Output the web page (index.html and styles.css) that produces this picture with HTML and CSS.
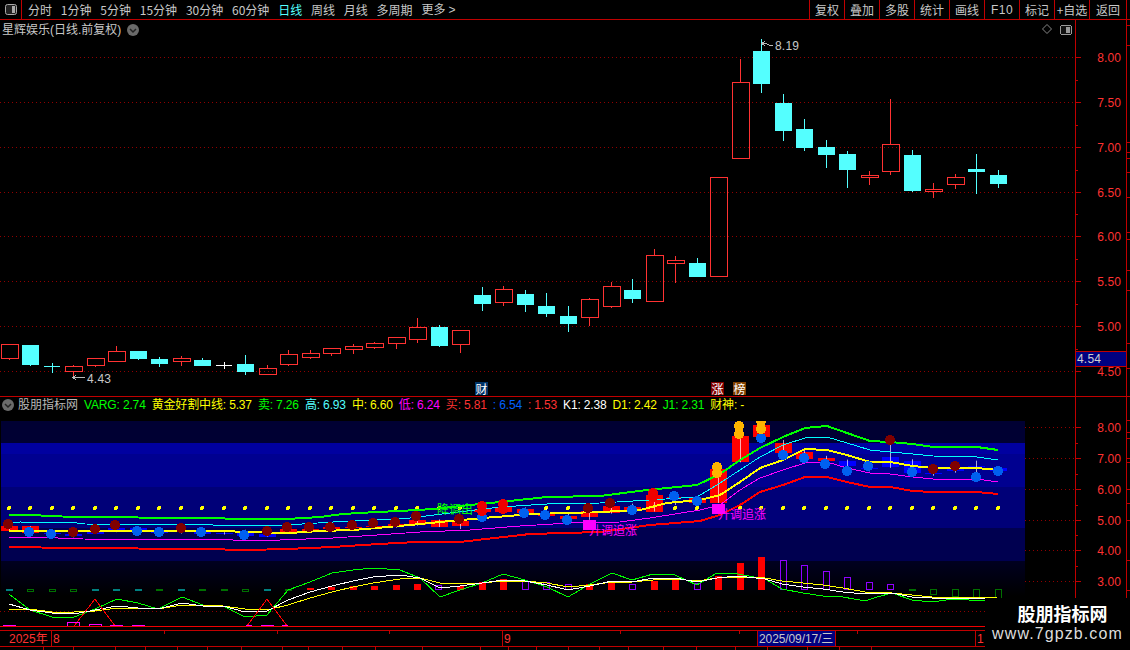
FILE: index.html
```html
<!DOCTYPE html>
<html lang="zh-CN">
<head>
<meta charset="utf-8">
<title>星辉娱乐</title>
<link rel="stylesheet" href="styles.css">
</head>
<body>
<div class="app">
  <header class="toolbar">
    <div class="toggle"><svg width="12" height="11" viewBox="0 0 12 11"><rect x=".5" y=".5" width="11" height="10" rx="2" class="toggle-box"/><rect x="7" y="2" width="3" height="7" class="toggle-fill"/></svg></div>
    <nav class="periods">
      <span>分时</span><span>1分钟</span><span>5分钟</span><span>15分钟</span><span>30分钟</span><span>60分钟</span><span class="active">日线</span><span>周线</span><span>月线</span><span>多周期</span><span>更多<i class="more">&gt;</i></span>
    </nav>
    <nav class="tabs">
      <span>复权</span><span>叠加</span><span>多股</span><span>统计</span><span>画线</span><span class="latin">F10</span><span>标记</span><span>+自选</span><span class="wide">返回</span>
    </nav>
  </header>

  <section class="main-row">
    <div class="canvas">
      <div class="title">星辉娱乐(日线.前复权)<svg class="chev" width="12" height="12" viewBox="0 0 12 12"><circle cx="6" cy="6" r="6"/><path d="M3 5l3 3 3-3"/></svg></div>
      <svg class="chart" width="1075" height="376" viewBox="0 20 1075 376">
        <path class="grid" d="M0 57.5H1075M0 102.5H1075M0 147.5H1075M0 192.5H1075M0 236.5H1075M0 281.5H1075M0 326.5H1075M0 371.5H1075"/>
        <path class="candle-up" d="M1.5 344.5h17v14h-17zM65.5 366.5h17v5h-17zM87.5 358.5h17v7h-17zM108.5 351.5h17v10h-17zM173.5 358.5h17v3h-17zM259.5 368.5h17v6h-17zM280.5 354.5h17v10h-17zM302.5 353.5h17v4h-17zM323.5 348.5h17v5h-17zM345.5 346.5h17v3h-17zM366.5 343.5h17v4h-17zM388.5 337.5h17v6h-17zM409.5 327.5h17v12h-17zM452.5 330.5h17v14h-17zM495.5 289.5h17v13h-17zM581.5 299.5h17v18h-17zM603.5 286.5h17v20h-17zM646.5 255.5h17v46h-17zM667.5 260.5h17v3h-17zM710.5 177.5h17v99h-17zM732.5 82.5h17v76h-17zM861.5 175.5h17v2h-17zM882.5 144.5h17v27h-17zM925.5 189.5h17v2h-17zM947.5 177.5h17v7h-17z"/>
        <path class="candle-down" d="M22 345h17v20h-17zM130 351h17v8h-17zM151 359h17v5h-17zM194 360h17v6h-17zM237 364h17v8h-17zM431 327h17v19h-17zM474 295h17v9h-17zM517 294h17v11h-17zM538 306h17v8h-17zM560 316h17v8h-17zM624 290h17v9h-17zM689 263h17v14h-17zM753 51h17v33h-17zM775 103h17v28h-17zM796 129h17v19h-17zM818 147h17v8h-17zM839 154h17v16h-17zM904 155h17v36h-17zM968 169h17v3h-17zM990 175h17v9h-17z"/>
        <path class="wick-up" d="M9.5 359V360M73.5 365V366M73.5 372V377M95.5 366V367M116.5 346V351M181.5 356V358M181.5 362V366M267.5 365V368M288.5 350V354M288.5 365V366M310.5 350V353M310.5 358V359M331.5 354V356M353.5 344V346M353.5 350V354M374.5 342V343M374.5 348V349M396.5 344V349M417.5 318V327M417.5 340V343M460.5 345V353M503.5 286V289M503.5 303V306M589.5 298V299M589.5 318V326M611.5 282V286M611.5 307V308M654.5 249V255M675.5 256V260M675.5 264V283M740.5 59V82M869.5 171V175M869.5 178V185M890.5 99V144M890.5 172V175M933.5 183V189M933.5 192V198M955.5 174V177M955.5 185V189"/>
        <path class="wick-down" d="M30.5 365V366M44 366.5H60M52.5 363V373M138.5 359V360M159.5 357V359M159.5 364V367M202.5 358V360M245.5 355V364M245.5 372V375M439.5 325V327M439.5 346V347M482.5 287V295M482.5 304V311M525.5 290V294M525.5 305V312M546.5 293V306M546.5 314V317M568.5 306V316M568.5 324V332M632.5 279V290M632.5 299V303M697.5 258V263M761.5 39V51M761.5 84V93M783.5 94V103M783.5 131V141M804.5 119V129M804.5 148V151M826.5 140V147M826.5 155V168M847.5 151V154M847.5 170V188M912.5 150V155M912.5 191V192M976.5 154V169M976.5 172V194M998.5 170V175M998.5 184V188"/>
        <path class="wick-flat" d="M216 365.5H232M224.5 362V369"/>
        <path class="marker" d="M762 43.5l4 0 3 1.500 4 0M765 41l-3 2.500 3 2.500M73 377.5H85M76 375l-3 2.500 3 2.500"/>
        <text class="mark-text" x="775" y="50">8.19</text>
        <text class="mark-text" x="87" y="383">4.43</text>
        <path class="pane-icon-diamond" d="M1047 24.500l4.500 4.500-4.500 4.500-4.500-4.500z"/>
        <rect class="pane-icon" x="1060.500" y="25.500" width="11" height="9" rx="2"/>
        <rect class="pane-icon-fill" x="1066" y="27" width="4" height="6"/>
      </svg>
      <div class="badges"><span class="badge b-cai">财</span><span class="badge b-zhang">涨</span><span class="badge b-bang">榜</span></div>
    </div>
    <svg class="axis" width="55" height="376" viewBox="1075 20 55 376">
      <path class="axis-line" d="M1075.500 20V396M1126.500 20V396M1075 57.500h6M1075 102.500h6M1075 147.500h6M1075 192.500h6M1075 236.500h6M1075 281.500h6M1075 326.500h6M1075 371.500h6M1075 80.500h3M1075 125.500h3M1075 170.500h3M1075 214.500h3M1075 259.500h3M1075 304.500h3M1075 349.500h3M1126 25.500h4M1126 45.500h4M1126 142.500h4M1126 152.500h4M1126 158.500h4M1126 172.500h4M1126 197.500h4M1126 232.500h4M1126 239.500h4M1126 270.500h4M1126 290.500h4M1126 343.500h4M1126 368.500h4"/>
      <g class="axis-labels"><text x="1121" y="62">8.00</text><text x="1121" y="107">7.50</text><text x="1121" y="152">7.00</text><text x="1121" y="197">6.50</text><text x="1121" y="241">6.00</text><text x="1121" y="286">5.50</text><text x="1121" y="331">5.00</text><text x="1121" y="376">4.50</text></g>
      <rect class="price-box" x="1075.500" y="351.500" width="51" height="15"/>
      <text class="price-text" x="1077" y="363">4.54</text>
    </svg>
  </section>

  <section class="sub-row">
    <div class="sub-left">
      <div class="legend">
        <svg class="chev" width="12" height="12" viewBox="0 0 12 12"><circle cx="6" cy="6" r="6"/><path d="M3 5l3 3 3-3"/></svg>
        <span class="c-name">股朋指标网</span><span class="c-green">VARG: 2.74</span><span class="c-yellow">黄金好割中线: 5.37</span><span class="c-green">卖: 7.26</span><span class="c-cyan">高: 6.93</span><span class="c-yellow">中: 6.60</span><span class="c-magenta">低: 6.24</span><span class="c-red">买: 5.81</span><span class="c-blue">: 6.54</span><span class="c-red">: 1.53</span><span class="c-white">K1: 2.38</span><span class="c-yellow">D1: 2.42</span><span class="c-green">J1: 2.31</span><span class="c-yellow">财神: -</span>
      </div>
      <svg class="chart" width="1075" height="209" viewBox="0 421 1075 209">
        <defs><linearGradient id="fade" x1="0" y1="0" x2="0" y2="1"><stop offset="0" stop-color="#000020"/><stop offset="1" stop-color="#000"/></linearGradient></defs>
        <rect class="band1" x="1" y="421" width="1024" height="22"/>
        <rect class="band2" x="1" y="443" width="1024" height="11"/>
        <rect class="band3" x="1" y="454" width="1024" height="33"/>
        <rect class="band4" x="1" y="487" width="1024" height="41"/>
        <rect class="band5" x="1" y="528" width="1024" height="33"/>
        <rect fill="url(#fade)" x="1" y="561" width="1024" height="35"/>
        <path class="grid" d="M1025 427.500H1075M1025 458.500H1075M1025 489.500H1075M1025 520.500H1075M1025 550.500H1075M1025 581.500H1075M0 611.500H1075"/>
        <path class="gold-dots" d="M9 508h.01M30 508h.01M52 508h.01M73 508h.01M95 508h.01M116 508h.01M138 508h.01M159 508h.01M181 508h.01M202 508h.01M224 508h.01M245 508h.01M267 508h.01M288 508h.01M310 508h.01M331 508h.01M353 508h.01M374 508h.01M396 508h.01M417 508h.01M439 508h.01M460 508h.01M546 508h.01M568 508h.01M675 508h.01M697 508h.01M740 508h.01M761 508h.01M783 508h.01M804 508h.01M826 508h.01M847 508h.01M869 508h.01M890 508h.01M912 508h.01M933 508h.01M955 508h.01M976 508h.01M998 508h.01"/>
        <g transform="translate(0 407.74) scale(1 .3437)">
          <path class="sub-up" d="M1 344h17v15h-17zM22 345h17v20h-17zM280 354h17v11h-17zM302 353h17v5h-17zM323 348h17v6h-17zM345 346h17v4h-17zM366 343h17v5h-17zM388 337h17v7h-17zM409 327h17v13h-17zM431 327h17v19h-17zM452 330h17v15h-17zM474 295h17v9h-17zM495 289h17v14h-17zM517 294h17v11h-17zM538 306h17v8h-17zM560 316h17v8h-17zM581 299h17v19h-17zM603 286h17v21h-17zM624 290h17v9h-17zM646 255h17v47h-17zM667 260h17v4h-17zM689 263h17v14h-17zM710 177h17v100h-17zM732 82h17v77h-17zM753 51h17v33h-17zM775 103h17v28h-17zM796 129h17v19h-17zM818 147h17v8h-17z"/>
          <path class="sub-down" d="M44 365h17v2h-17zM65 366h17v6h-17zM87 358h17v8h-17zM108 351h17v11h-17zM130 351h17v8h-17zM151 359h17v5h-17zM173 358h17v4h-17zM194 360h17v6h-17zM216 364h17v2h-17zM237 364h17v8h-17zM259 368h17v7h-17zM839 154h17v16h-17zM861 175h17v3h-17zM882 144h17v28h-17zM904 155h17v36h-17zM925 189h17v3h-17zM947 177h17v8h-17zM968 169h17v3h-17zM990 175h17v9h-17z"/>
          <path class="sub-wick" d="M9.500 344V360M30.500 345V366M52.500 363V373M73.500 365V377M95.500 358V367M116.500 346V362M138.500 351V360M159.500 357V367M181.500 356V366M202.500 358V366M224.500 362V369M245.500 355V375M267.500 365V375M288.500 350V366M310.500 350V359M331.500 348V358M353.500 344V354M374.500 342V349M396.500 337V349M417.500 318V343M439.500 325V347M460.500 330V353M482.500 287V311M503.500 286V306M525.500 290V312M546.500 293V317M568.500 306V332M589.500 298V326M611.500 282V308M632.500 279V303M654.500 249V302M675.500 256V283M697.500 258V277M718.500 177V277M740.500 59V159M761.500 39V93M783.500 94V141M804.500 119V151M826.500 140V168M847.500 151V188M869.500 171V185M890.500 99V175M912.500 150V192M933.500 183V198M955.500 174V189M976.500 154V194M998.500 170V188"/>
        </g>
        <polyline class="l-magenta" points="9,538 33,537 83,539 233,540 257,541 280,540 333,538 377,535 420,532 470,530 520,526 570,523 620,522 650,518 700,510 720,505 740,490 760,478 783,470 805,463 827,462 847,468 870,473 890,474 913,477 933,479 977,479 998,482"/>
        <polyline class="l-cyan" points="9,523 20,522 77,523 85,524 213,525 267,526 287,525 333,522 377,520 410,518 450,513 500,507 547,504 600,503 650,500 697,497 720,483 740,470 760,457 783,445 805,438 827,437 847,443 870,450 890,452 913,454 933,456 977,457 998,460"/>
        <polyline class="l-green" points="9,515 30,515 73,517 203,518 247,519 287,519 320,517 343,514 377,512 400,511 433,509 470,505 500,502 547,497 600,496 647,490 697,485 720,474 740,460 760,448 783,437 805,428 827,426 847,433 870,441 890,442 913,444 933,447 977,447 998,450"/>
        <polyline class="l-yellow" points="9,531 224,531 245,532 290,533 320,531 353,530 377,528 410,525 440,522 483,518 533,514 600,512 640,510 667,503 700,500 720,495 740,482 760,468 783,460 805,449 827,450 847,455 870,462 890,462 913,466 933,468 977,468 998,470"/>
        <polyline class="l-red" points="9,547 73,548 203,549 247,550 287,549 333,547 363,545 397,543 417,542 460,542 477,540 530,534 600,532 650,525 700,521 720,515 740,505 760,492 783,485 805,477 827,477 847,482 870,487 890,487 913,491 933,492 977,492 998,494"/>
        <text class="t-green" x="437" y="514">降调出</text>
        <rect class="t-box" x="583" y="520" width="13" height="10"/>
        <text class="t-magenta" x="589" y="535">升调追涨</text>
        <rect class="t-box" x="712" y="504" width="13" height="10"/>
        <text class="t-magenta" x="718" y="519">升调追涨</text>
        <g class="dot-blue"><circle cx="29" cy="532" r="5"/><circle cx="51" cy="534" r="5"/><circle cx="137" cy="531" r="5"/><circle cx="159" cy="532" r="5"/><circle cx="201" cy="532" r="5"/><circle cx="244" cy="535" r="5"/><circle cx="482" cy="517" r="5"/><circle cx="524" cy="513" r="5"/><circle cx="545" cy="515" r="5"/><circle cx="567" cy="520" r="5"/><circle cx="632" cy="510" r="5"/><circle cx="674" cy="496" r="5"/><circle cx="697" cy="501" r="5"/><circle cx="761" cy="438" r="5"/><circle cx="783" cy="455" r="5"/><circle cx="804" cy="458" r="5"/><circle cx="825" cy="464" r="5"/><circle cx="847" cy="471" r="5"/><circle cx="868" cy="466" r="5"/><circle cx="912" cy="472" r="5"/><circle cx="976" cy="477" r="5"/><circle cx="998" cy="471" r="5"/></g>
        <g class="dot-dark"><circle cx="8" cy="524" r="5"/><circle cx="73" cy="532" r="5"/><circle cx="95" cy="529" r="5"/><circle cx="115" cy="525" r="5"/><circle cx="181" cy="528" r="5"/><circle cx="267" cy="531" r="5"/><circle cx="287" cy="527" r="5"/><circle cx="309" cy="527" r="5"/><circle cx="330" cy="527" r="5"/><circle cx="352" cy="525" r="5"/><circle cx="373" cy="523" r="5"/><circle cx="395" cy="522" r="5"/><circle cx="416" cy="516" r="5"/><circle cx="459" cy="519" r="5"/><circle cx="588" cy="508" r="5"/><circle cx="610" cy="503" r="5"/><circle cx="890" cy="440" r="5"/><circle cx="933" cy="469" r="5"/><circle cx="955" cy="466" r="5"/></g>
        <g class="dot-red"><circle cx="482" cy="506" r="5"/><circle cx="482" cy="511" r="5"/><circle cx="503" cy="504" r="5"/><circle cx="503" cy="509" r="5"/><circle cx="653" cy="493" r="5"/><circle cx="653" cy="497" r="5"/></g>
        <g class="dot-gold"><circle cx="717" cy="467" r="5"/><circle cx="717" cy="473" r="5"/><circle cx="739" cy="426" r="5"/><circle cx="739" cy="434" r="5"/><circle cx="761" cy="421" r="5"/><circle cx="761" cy="429" r="5"/></g>
        <path class="bar-teal" d="M6 589h7v2H6zM92 589h7v2h-7zM113 589h7v2h-7zM135 589h7v2h-7zM178 589h7v2h-7zM264 589h7v2h-7z"/>
        <path class="bar-green" d="M156 589h7v2h-7zM199 589h7v2h-7zM221 589h7v2h-7zM909 589h7v2h-7z"/>
        <path class="bar-hollow-green" d="M27.500 589.500h6v2h-6zM49.500 589.500h6v2h-6zM70.500 589.500h6v2h-6zM242.500 589.500h6v2h-6zM285.500 589.500h6v1h-6zM930.500 589.500h6v5h-6zM952.500 589.500h6v7h-6zM973.500 589.500h6v8h-6zM995.500 589.500h6v9h-6z"/>
        <path class="bar-red" d="M307 588h7v2h-7zM328 587h7v3h-7zM350 586h7v4h-7zM371 586h7v4h-7zM393 585h7v5h-7zM414 584h7v6h-7zM457 586h7v4h-7zM479 582h7v8h-7zM500 579h7v11h-7zM586 584h7v6h-7zM608 583h7v7h-7zM651 581h7v9h-7zM672 580h7v10h-7zM715 576h7v14h-7zM737 563h7v27h-7zM758 557h7v33h-7z"/>
        <path class="bar-purple" d="M435.500 585.500h6v4h-6zM522.500 581.500h6v8h-6zM543.500 582.500h6v7h-6zM565.500 584.500h6v5h-6zM629.500 584.500h6v5h-6zM694.500 583.500h6v6h-6zM780.500 560.500h6v29h-6zM801.500 565.500h6v24h-6zM823.500 571.500h6v18h-6zM844.500 577.500h6v12h-6zM866.500 582.500h6v7h-6zM887.500 584.500h6v5h-6z"/>
        <polyline class="k-green" points="9,594 30,610 52,617 74,617 95,609 117,599 138,603 158,609 182,597 203,605 223,606 245,617 267,615 288,590 310,582 332,573 353,570 373,568 400,570 420,578 440,597 460,590 482,583 503,574 525,580 547,587 568,597 590,584 612,573 632,580 653,574 675,575 697,585 717,573 738,574 765,579 782,589 803,593 823,596 843,597 865,601 877,597 892,593 912,600 932,602 953,599 985,601"/>
        <polyline class="k-yellow" points="9,609 30,609 52,612 74,612 95,611 117,608 138,608 158,609 182,605 203,605 223,606 245,609 267,610 288,605 310,598 332,592 353,587 373,583 400,579 420,578 440,583 460,584 482,583 503,581 525,581 547,583 568,587 590,585 612,582 632,582 653,580 675,579 697,581 717,578 738,577 765,578 782,581 803,583 823,585 843,588 865,592 892,593 912,595 932,597 953,598 985,597 997,598"/>
        <polyline class="k-white" points="9,604 30,610 52,613 74,614 95,610 117,606 138,608 158,609 182,603 203,606 223,606 245,612 267,611 288,600 310,592 332,586 353,581 373,577 400,575 420,578 440,588 460,586 482,583 503,580 525,581 547,585 568,590 590,586 612,581 632,582 653,578 675,578 697,582 717,578 738,576 765,579 782,584 803,587 823,589 843,592 865,594 892,593 912,597 932,598 953,598 985,599 997,599"/>
        <polyline class="k-red" points="74,626 95,599 115,626"/>
        <polyline class="k-red" points="247,626 267,599 287,626"/>
        <path class="bar-magenta" d="M3 625h13v2H3zM110 625h13v2h-13zM132 625h13v2h-13zM246 625h6v2h-6zM261 625h13v2h-13zM282 625h6v2h-6z"/>
        <path class="bar-hollow-magenta" d="M67.500 622.500h12v4h-12zM89.500 624.500h12v2h-12z"/>
        <path class="base-line" d="M0 626.500H1075"/>
      </svg>
      <div class="dates">
        <svg class="date-ticks" width="1075" height="3" viewBox="0 0 1075 3"><path d="M164.500 0v3M277.500 0v3M389.500 0v3M620.500 0v3M739.500 0v3M857.500 0v3"/></svg>
        <span class="d-first"><b>2025年</b></span><span class="d-eight">8</span><span class="d-nine">9</span><span class="d-current">2025/09/17/三</span><span class="d-gap"></span><span class="d-last">1</span>
      </div>
      <svg class="tail" width="1075" height="3" viewBox="0 0 1075 3"><path d="M43.500 0v3M73.500 0v3M115.500 0v3M145.500 0v3M177.500 0v3M207.500 0v3M241.500 0v3M282.500 0v3M308.500 0v3M342.500 0v3M375.500 0v3M422.500 0v3M480.500 0v3M508.500 0v3M536.500 0v3M568.500 0v3M599.500 0v3M628.500 0v3M663.500 0v3M696.500 0v3M735.500 0v3M767.500 0v3M807.500 0v3M839.500 0v3M871.500 0v3"/></svg>
    </div>
    <svg class="axis" width="55" height="253" viewBox="1075 397 55 253">
      <path class="axis-line" d="M1075.500 397V650M1126.500 397V650M1075 427.500h6M1075 458.500h6M1075 489.500h6M1075 520.500h6M1075 550.500h6M1075 581.500h6M1075 443.500h3M1075 474.500h3M1075 505.500h3M1075 535.500h3M1075 566.500h3M1126 420.500h4M1126 432.500h4M1126 438.500h4M1126 458.500h4M1126 462.500h4M1126 489.500h4M1126 503.500h4M1126 520.500h4M1126 560.500h4M1126 590.500h4"/>
      <g class="axis-labels"><text x="1121" y="432">8.00</text><text x="1121" y="463">7.00</text><text x="1121" y="494">6.00</text><text x="1121" y="525">5.00</text><text x="1121" y="555">4.00</text><text x="1121" y="586">3.00</text></g>
    </svg>
  </section>

  <aside class="watermark"><strong>股朋指标网</strong><span>www.7gpzb.com</span></aside>
</div>
</body>
</html>
```
FILE: styles.css
```css
* { box-sizing: border-box; }
html, body { margin: 0; padding: 0; background: #000; }
body { width: 1130px; height: 650px; overflow: hidden; font: 12px/1 "Liberation Sans", "Noto Sans CJK SC", sans-serif; color: #c8c8c8; }
.app { position: relative; width: 1130px; height: 650px; display: flex; flex-direction: column; }

/* toolbar */
.toolbar { display: flex; height: 20px; border-bottom: 1px solid #c00000; font-family: "Noto Sans CJK SC", sans-serif; flex: none; }
.toggle { width: 22px; display: flex; align-items: center; justify-content: center; border-right: 1px solid #c00000; }
.toggle-box { fill: #222; stroke: #aaa; }
.toggle-fill { fill: #aaa; }
.periods { display: flex; align-items: center; gap: 8.800px; padding-left: 6px; flex: 1; }
.periods span { white-space: nowrap; }
.periods .active { color: #54ffff; }
.more { font-style: normal; font-family: "Liberation Sans", sans-serif; margin-left: 3px; }
.tabs { display: flex; margin-right: 3px; border-right: 1px solid #c00000; }
.tabs span { width: 35px; display: flex; align-items: center; justify-content: center; border-left: 1px solid #c00000; white-space: nowrap; }
.tabs .wide { width: 37px; }
.tabs .latin { font-family: "Liberation Sans", sans-serif; letter-spacing: .5px; }

/* panels */
.main-row { display: flex; height: 377px; border-bottom: 1px solid #c00000; flex: none; }
.canvas { position: relative; width: 1075px; height: 376px; flex: none; }
.chart { display: block; shape-rendering: crispEdges; }
.axis { display: block; flex: none; shape-rendering: crispEdges; }
.title { position: absolute; left: 2px; top: 3px; display: flex; align-items: center; gap: 6px; font-size: 12px; line-height: 14px; font-family: "Liberation Sans", "Noto Sans CJK SC", sans-serif; }
.chev { flex: none; shape-rendering: auto; }
.chev circle { fill: #6a6a6a; }
.chev path { fill: none; stroke: #222; stroke-width: 1.500; }
.badges { position: absolute; left: 475px; top: 362px; width: 271px; display: grid; grid-template-columns: 236px 22px 13px; }
.badge { width: 13px; height: 13px; font: 12px/13px "Noto Sans CJK SC", sans-serif; text-align: center; color: #fff; }
.b-cai { background: #003366; }
.b-zhang { background: #800000; }
.b-bang { background: #804000; }

/* main chart */
.grid { fill: none; stroke: #900000; stroke-dasharray: 1 3; }
.candle-up { fill: none; stroke: #ff3232; }
.candle-down { fill: #54ffff; }
.wick-up { stroke: #ff3232; fill: none; }
.wick-down { stroke: #54ffff; fill: none; }
.wick-flat { stroke: #fff; fill: none; }
.marker { fill: none; stroke: #bbb; }
.mark-text { font-size: 12px; fill: #c8c8c8; letter-spacing: .2px; }
.pane-icon-diamond { fill: none; stroke: #888; shape-rendering: auto; }
.pane-icon { fill: #111; stroke: #999; }
.pane-icon-fill { fill: #999; }

/* axis */
.axis-line { fill: none; stroke: #c00000; }
.axis-labels text { font-size: 12px; fill: #ff3232; text-anchor: end; letter-spacing: .1px; }
.price-box { fill: #000080; stroke: #c00000; }
.price-text { font-size: 12px; fill: #d0d0d0; letter-spacing: .2px; }

/* sub chart */
.sub-row { display: flex; flex: 1; }
.sub-left { width: 1075px; flex: none; display: flex; flex-direction: column; }
.legend { height: 24px; display: flex; align-items: center; gap: 6px; padding: 0 0 8px 2px; white-space: nowrap; letter-spacing: -.15px; }
.legend .c-name { margin-left: -2px; letter-spacing: 0; }
.c-name { color: #b8b8b8; }
.c-green { color: #00ff00; }
.c-yellow { color: #ffff00; }
.c-cyan { color: #54ffff; }
.c-magenta { color: #ff00ff; }
.c-red { color: #ff3232; }
.c-blue { color: #0060ff; }
.c-white { color: #fff; }
.band1 { fill: #000033; }
.band2 { fill: #0000a0; }
.band3 { fill: #000090; }
.band4 { fill: #000078; }
.band5 { fill: #000050; }
.gold-dots { stroke: #ffff00; stroke-width: 4; stroke-linecap: round; fill: none; }
.sub-up { fill: #ff0000; }
.sub-down { fill: #0000ff; }
.sub-wick { stroke: #fff; fill: none; }
polyline { fill: none; }
.l-green { stroke: #00ff00; stroke-width: 2; }
.l-cyan { stroke: #00ffff; }
.l-yellow { stroke: #ffff00; stroke-width: 2; }
.l-magenta { stroke: #ff00ff; }
.l-red { stroke: #ff0000; stroke-width: 2; }
.t-green { font: 12px "Noto Sans CJK SC", sans-serif; fill: #00ff00; }
.t-magenta { font: 12px "Noto Sans CJK SC", sans-serif; fill: #ff00ff; }
.t-box { fill: #ff00ff; }
.dot-blue { fill: #0060f0; }
.dot-dark { fill: #800000; }
.dot-red { fill: #f00000; }
.dot-gold { fill: #ffb400; }
.bar-teal { fill: #008080; }
.bar-green { fill: #007000; }
.bar-hollow-green { fill: none; stroke: #007000; }
.bar-red { fill: #ff0000; }
.bar-purple { fill: none; stroke: #9000ff; }
.bar-magenta { fill: #ff00ff; }
.bar-hollow-magenta { fill: none; stroke: #ff00ff; }
.k-green { stroke: #00ff00; }
.k-yellow { stroke: #ffff00; }
.k-white { stroke: #fff; }
.k-red { stroke: #ff0000; }
.base-line { stroke: #f00000; stroke-width: 1; }

/* dates */
.dates { position: relative; display: flex; height: 17px; border-top: 1px solid #c00000; border-bottom: 1px solid #c00000; color: #ff3232; flex: none; }
.date-ticks { position: absolute; left: 0; top: 0; shape-rendering: crispEdges; }
.date-ticks path, .tail path { stroke: #c00000; fill: none; }
.dates span { display: flex; align-items: center; border-left: 1px solid #c00000; padding-left: 1px; }
.dates .d-first { width: 51px; border-left: 0; padding-left: 9px; }
.dates b { font-weight: normal; font-family: "Liberation Sans", "Noto Sans CJK SC", sans-serif; }
.d-eight { width: 451px; }
.d-nine { width: 255px; }
.dates .d-current { width: 78px; background: #000080; color: #c8c8c8; white-space: nowrap; overflow: hidden; font-size: 12px; letter-spacing: -.1px; }
.d-gap { width: 140px; border-left: 1px solid #c00000; }
.d-last { flex: 1; }
.tail { display: block; shape-rendering: crispEdges; }

/* watermark */
.watermark { position: absolute; left: 985px; top: 598px; width: 145px; height: 52px; background: #000; display: flex; flex-direction: column; align-items: center; padding-top: 5px; gap: 3px; }
.watermark strong { font: bold 18px/20px "Noto Sans CJK SC", sans-serif; color: #fff; padding-left: 10px; }
.watermark span { font: 16px/16px "Liberation Sans", sans-serif; color: #ddd; letter-spacing: 1.100px; }
```
